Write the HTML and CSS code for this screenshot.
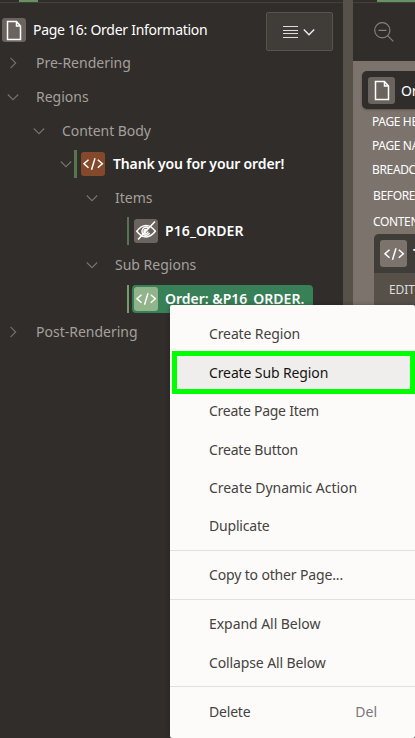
FILE: index.html
```html
<!DOCTYPE html>
<html lang="en">
<head>
<meta charset="utf-8">
<title>Page Designer</title>
<link rel="stylesheet" href="styles.css">
</head>
<body>
<svg width="0" height="0" class="defs">
  <symbol id="page" viewBox="0 0 24 24"><path d="M5.500 3.500h9l4 4.500v13.500h-13z M14.500 3.500v4.500h4"/></symbol>
  <symbol id="code" viewBox="0 0 24 24"><path d="M7.500 7.800l-4.500 4 4.500 4M16.800 7.800l4.500 4-4.500 4M14 6.200l-3.500 11.500"/></symbol>
  <symbol id="hidden" viewBox="0 0 24 24"><path d="M2.800 12.300C6 8 9 6.500 12 6.500s6.200 1.600 9.300 5.800C18 16.500 15 18 12 18s-6-1.500-9.200-5.700zM21 2.500l-17 18M14.800 9.500a4 4 0 1 0 .8 4.500M12.500 10.500a2 2 0 1 0 1.500 2"/></symbol>
  <symbol id="chev" viewBox="0 0 12 12"><path d="M.8 3.500L6 8.700l5.200-5.200"/></symbol>
</svg>
<div class="app">
  <section class="pane tree">
    <div class="strip"><i class="tab"></i></div>
    <ul class="rows">
      <li class="row root"><span class="icon"><svg><use href="#page"/></svg></span><span class="label t-page">Page 16: Order Information</span></li>
      <li class="row d0"><svg class="chev right"><use href="#chev"/></svg><span class="label">Pre-Rendering</span></li>
      <li class="row d0"><svg class="chev"><use href="#chev"/></svg><span class="label">Regions</span></li>
      <li class="row d1"><svg class="chev"><use href="#chev"/></svg><span class="label t-body">Content Body</span></li>
      <li class="row region"><svg class="chev"><use href="#chev"/></svg><i class="bar wide"></i><span class="icon brown"><svg><use href="#code"/></svg></span><b class="label t-thanks">Thank you for your order!</b></li>
      <li class="row d2"><svg class="chev"><use href="#chev"/></svg><span class="label">Items</span></li>
      <li class="row leaf"><i class="bar"></i><span class="icon"><svg><use href="#hidden"/></svg></span><b class="label t-item">P16_ORDER</b></li>
      <li class="row d2"><svg class="chev"><use href="#chev"/></svg><span class="label">Sub Regions</span></li>
      <li class="row leaf"><i class="bar light"></i><span class="selected"><span class="icon green"><svg><use href="#code"/></svg></span><b class="label">Order: &amp;P16_ORDER.</b></span></li>
      <li class="row d0"><svg class="chev right"><use href="#chev"/></svg><span class="label">Post-Rendering</span></li>
    </ul>
    <div class="menu-button"><svg class="lines" viewBox="0 0 16 14"><path d="M0 1.500h15M0 5.500h15M0 8.500h15M0 12.500h15"/></svg><svg class="chev"><use href="#chev"/></svg></div>
  </section>
  <div class="splitter"></div>
  <section class="pane layout">
    <div class="toolbar">
      <div class="strip"><i class="tab"></i></div>
      <svg class="zoom" viewBox="0 0 20 20"><circle cx="8.300" cy="8.300" r="7.600"/><path d="M4.500 8.300h8M13.800 13.800l5.500 5.500"/></svg>
    </div>
    <div class="canvas">
      <div class="card"><span class="icon"><svg><use href="#page"/></svg></span><span>Or</span></div>
      <ul class="slots"><li>PAGE HE</li><li>PAGE NA</li><li>BREADC</li><li>BEFORE</li><li>CONTEN</li></ul>
      <div class="box"><div class="box-head"><span class="icon"><svg><use href="#code"/></svg></span><b>T</b></div><div class="box-slot">EDIT</div></div>
    </div>
  </section>
</div>
<ul class="menu">
  <li><span class="m1">Create Region</span></li>
  <li class="active"><span class="m2">Create Sub Region</span></li>
  <li><span class="m3">Create Page Item</span></li>
  <li><span class="m4">Create Button</span></li>
  <li><span class="m5">Create Dynamic Action</span></li>
  <li><span class="m6">Duplicate</span></li>
  <li class="sep"></li>
  <li><span class="m7">Copy to other Page...</span></li>
  <li class="sep"></li>
  <li><span class="m8">Expand All Below</span></li>
  <li><span class="m9">Collapse All Below</span></li>
  <li class="sep"></li>
  <li><span class="m10">Delete</span><span class="key">Del</span></li>
</ul>
<div class="highlight"></div>
</body>
</html>
```

FILE: styles.css
```css
* { box-sizing: border-box; }
body { margin: 0; width: 415px; height: 738px; overflow: hidden; position: relative; background: #312d2a; font-family: "Noto Sans", "Open Sans", sans-serif; font-size: 14px; color: #fff; }
ul { margin: 0; padding: 0; list-style: none; }
svg { display: block; fill: none; stroke: currentColor; flex: none; }
.defs { position: absolute; }
.app { display: flex; height: 738px; }
.pane { flex: none; position: relative; overflow: hidden; }
.tree { width: 343px; }
.strip { height: 3px; border-bottom: 1px solid #45403c; padding-left: 19px; }
.tab { display: block; width: 19px; height: 2px; background: #679363; }
.rows { padding-top: 10px; }
.row { display: flex; align-items: center; height: 33.600px; color: #a3a09d; white-space: nowrap; }
.label { line-height: 20px; }
.root { padding-left: 2px; color: #fff; }
.icon { display: flex; align-items: center; justify-content: center; width: 24px; height: 24px; border-radius: 3px; background: #6b635e; color: #fff; flex: none; }
.icon svg { width: 24px; height: 24px; stroke-width: 1.500; }
.brown { background: #84492b; }
.green { background: #91b48a; }
.root .label { margin-left: 7px; }
.chev { width: 12px; height: 12px; color: #77736f; stroke-width: 1.100; }
.right { transform: rotate(-90deg); }
.d0 { padding-left: 7px; }
.d0 .label { margin-left: 17px; }
.d1 { padding-left: 33px; }
.d1 .label { margin-left: 17px; }
.d2 { padding-left: 86px; }
.d2 .label { margin-left: 17px; }
.region { padding-left: 60px; color: #fff; }
.bar { width: 2px; height: 28px; background: #587451; margin-right: 5px; flex: none; }
.wide { width: 3px; margin: 0 4px 0 2px; }
.light { background: #759a6d; margin-right: 3px; }
.leaf { padding-left: 127px; color: #fff; }
.region .label, .leaf .label { margin-left: 8px; font-weight: 600; }
.leaf .label { margin-left: 7px; }
.t-page { letter-spacing: -.27px; }
.t-body { letter-spacing: -.06px; }
.t-thanks { letter-spacing: -.14px; }
.t-item { letter-spacing: .1px; }
.selected { display: flex; align-items: center; height: 28px; width: 181px; padding-left: 2px; border-radius: 4px; background: #388057; }
.menu-button { position: absolute; left: 266px; top: 12px; width: 67px; height: 39px; border: 1px solid #57534e; border-radius: 2px; background: #403c38; display: flex; align-items: center; padding-left: 16px; gap: 4px; color: #ddd; }
.lines { width: 16px; height: 14px; }
.menu-button .chev { color: #eee; stroke-width: 1.400; }
.splitter { width: 10px; background: #565149; flex: none; }
.layout { width: 62px; background: #7c736d; }
.toolbar { height: 61px; background: #312d2a; }
.layout .strip { padding-left: 24px; }
.layout .tab { width: 38px; }
.zoom { width: 20px; height: 20px; margin: 19px 0 0 21px; color: #85817d; stroke-width: 1.200; }
.canvas { padding-top: 10px; white-space: nowrap; }
.card { margin-left: 9px; width: 60px; height: 38px; border-radius: 5px 0 0 5px; background: #312d2a; display: flex; align-items: center; padding-left: 6px; gap: 6px; box-shadow: 0 1px 2px #5b544f; letter-spacing: -.3px; }
.canvas .icon { width: 27px; height: 27px; }
.slots { padding: 1px 0 0 19px; font-size: 12px; letter-spacing: -.35px; }
.slots li { height: 24px; line-height: 24px; }
.slots li:nth-child(n+4) { height: 26px; line-height: 27px; padding-left: 1px; }
.box { margin-left: 21px; width: 60px; height: 510px; border-radius: 5px 0 0 0; background: #565049; overflow: hidden; }
.box-head { height: 39px; background: #403c38; display: flex; align-items: center; padding-left: 6px; gap: 6px; }
.box-head .icon { background: #7c736d; }
.box-slot { padding: 8px 0 0 15px; font-size: 12px; line-height: 17px; color: #ddd; letter-spacing: -.1px; }
.menu { position: absolute; left: 170px; top: 305px; width: 245px; height: 433px; padding-top: 9.650px; border-radius: 2px; background: #fcfbfa; color: #454240; box-shadow: 0 0 5px rgba(0,0,0,.3); white-space: nowrap; }
.menu li { display: flex; align-items: center; justify-content: space-between; height: 38.400px; padding: 0 38px 0 39px; }
.menu .active { background: #f0eeec; color: #161513; }
.menu .sep { height: 1px; margin: 4.800px 0; padding: 0; background: #e2e0de; }
.menu .key { color: #7b7774; }
.m1, .m2, .m9 { letter-spacing: -.12px; }
.m3 { letter-spacing: -.25px; }
.m4, .m6, .m10 { letter-spacing: -.2px; }
.m5, .m8 { letter-spacing: -.05px; }
.m7 { letter-spacing: -.15px; }
.highlight { position: absolute; left: 172px; top: 351px; width: 243px; height: 43px; border: 5px solid #0f0; }
```
